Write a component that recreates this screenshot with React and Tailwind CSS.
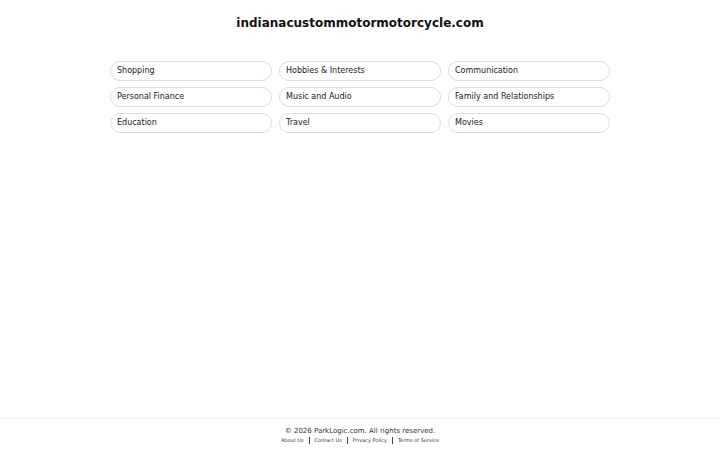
const categories = [
  'Shopping',
  'Hobbies & Interests',
  'Communication',
  'Personal Finance',
  'Music and Audio',
  'Family and Relationships',
  'Education',
  'Travel',
  'Movies',
];

const footerLinks = ['About Us', 'Contact Us', 'Privacy Policy', 'Terms of Service'];

export default function App() {
  return (
    <div className="flex min-h-screen flex-col bg-white font-['DejaVu_Sans',sans-serif] text-[#1f2328]">
      {/* Header */}
      <header className="pt-[15px] text-center">
        <h1 className="text-[12px] font-bold leading-[16px] text-[#111]">
          indianacustommotormotorcycle.com
        </h1>
      </header>

      {/* Category links */}
      <main className="flex-1">
        <div className="mx-auto mt-[30px] grid w-[500px] grid-cols-3 gap-x-[7px] gap-y-[6px]">
          {categories.map((cat) => (
            <a
              key={cat}
              href="#"
              className="flex h-[20px] items-center rounded-full border border-[#dcdcdc] px-[6px] text-[8px] text-[#1a1a1a]"
            >
              {cat}
            </a>
          ))}
        </div>
      </main>

      {/* Footer */}
      <footer className="border-t border-[#eeeeee] pb-[6px] pt-[7px] text-center">
        <p className="text-[7px] leading-[10px] text-[#333]">
          © 2026 ParkLogic.com. All rights reserved.
        </p>
        <div className="flex items-center justify-center gap-[5px] text-[5px] leading-[8px] text-[#333]">
          {footerLinks.map((link, i) => (
            <span key={link} className="flex items-center gap-[5px]">
              {i > 0 && <span className="h-[7px] w-px bg-[#444]" />}
              <a href="#">{link}</a>
            </span>
          ))}
        </div>
      </footer>
    </div>
  );
}
